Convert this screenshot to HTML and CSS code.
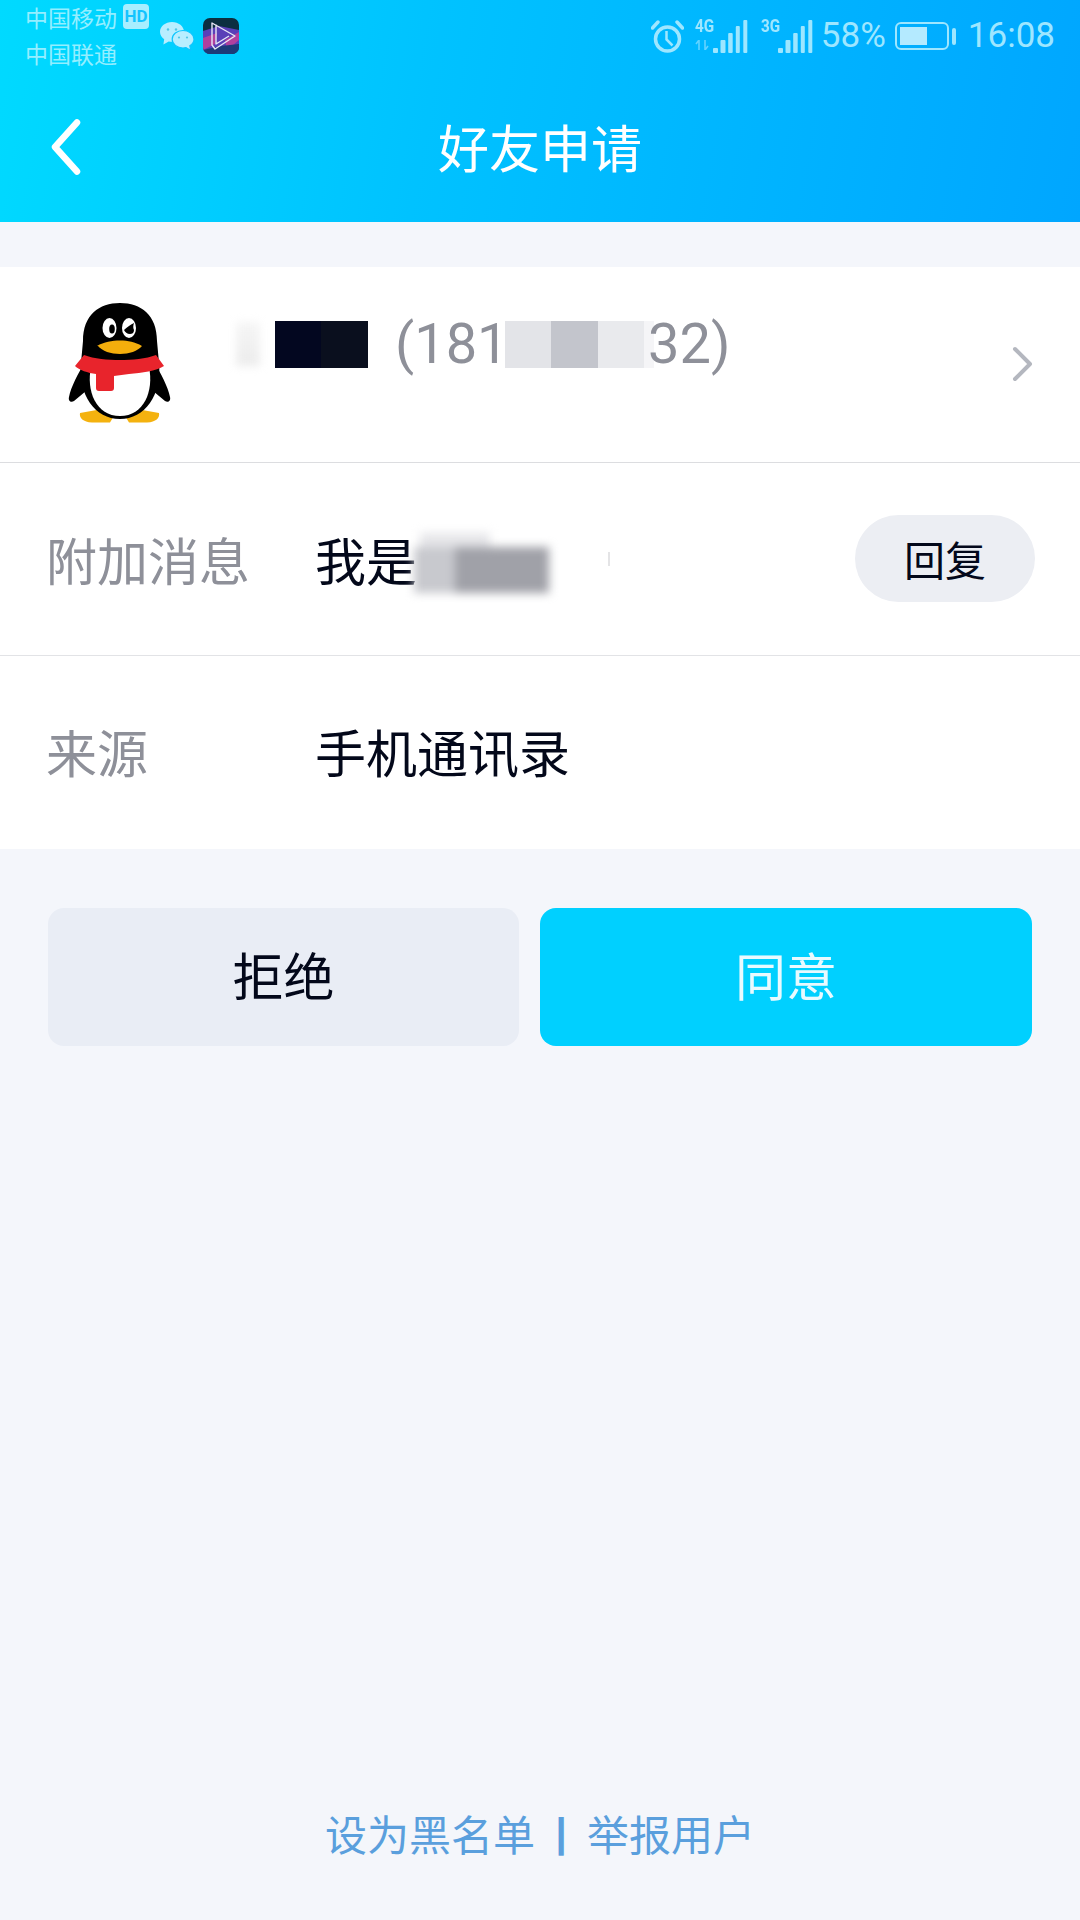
FILE: index.html
```html
<!DOCTYPE html>
<html lang="zh">
<head>
<meta charset="utf-8">
<title>好友申请</title>
<link rel="stylesheet" href="styles.css">
</head>
<body>
<div class="screen">
  <header class="header">
    <div class="status">
      <div class="carriers">
        <div class="carrier">中国移动<span class="hd">HD</span></div>
        <div class="carrier">中国联通</div>
      </div>
      <svg class="wechat" width="34" height="29" viewBox="0 0 34 29">
        <path d="M12 0C5.500 0 0 4.300 0 9.800c0 3 1.700 5.600 4.200 7.400L3.400 22.500l5.300-3.100c1 .3 2.100.4 3.300.4 6.500 0 12-4.500 12-10S18.500 0 12 0z" fill="#b8eeff"/>
        <path d="M23 8.500c-6 0-10.800 3.900-10.800 8.700S17 26 23 26c1 0 2-.1 3-.4l4.800 3-1-4.900c2.700-1.600 4.200-4 4.200-6.500 0-4.800-5-8.700-11-8.700z" fill="#b8eeff" stroke="#0cc6ff" stroke-width="1.200"/>
        <circle cx="8" cy="7.500" r="1.200" fill="#52c8e6"/><circle cx="16" cy="7.500" r="1.200" fill="#52c8e6"/>
        <circle cx="19" cy="15.500" r="1.100" fill="#52c8e6"/><circle cx="27" cy="15.500" r="1.100" fill="#52c8e6"/>
      </svg>
      <svg class="app" width="36" height="36" viewBox="0 0 36 36">
        <defs>
          <clipPath id="appclip"><rect width="36" height="36" rx="7"/></clipPath>
        </defs>
        <g clip-path="url(#appclip)">
          <rect width="36" height="36" fill="#0b2f40"/>
          <path d="M0 13L16 8 36 12V26L20 34 0 36z" fill="#5a3fb8"/>
          <path d="M0 20L14 15 12 26 0 32zM22 22L36 14V22L24 32z" fill="#b0409e"/>
          <path d="M0 32L18 28 36 26V36H0z" fill="#1c3a78"/>
          <path d="M9 5L32 18 12 31 9 27zM13 6.500V26L26 18" fill="none" stroke="#e6e6f5" stroke-width="1.400" stroke-linejoin="round"/>
        </g>
      </svg>
      <div class="spacer"></div>
      <svg class="alarm" width="33" height="33" viewBox="0 0 33 33" fill="none" stroke="#9ee6ff" stroke-width="3.500">
        <circle cx="16.500" cy="19" r="12"/>
        <path d="M15.500 11v8.500l6 6" stroke-width="2.500"/>
        <path d="M1.500 8l5.500-6M31.500 8L26 2" stroke-linecap="round"/>
      </svg>
      <div class="sim sim-4g">
        <span class="net">4G</span>
        <svg class="updown" width="16" height="10" viewBox="0 0 16 10"><path d="M4 0v10M1 4l3-4M10 0v10l3-4" stroke="#63d2ff" stroke-width="1.600" fill="none"/></svg>
      </div>
      <svg class="bars" width="35" height="34" viewBox="0 0 35 34" fill="#9ee6ff">
        <rect x="0" y="28" width="5" height="5" rx="1"/><rect x="7.500" y="20" width="5" height="13" rx="1"/><rect x="15.200" y="13" width="4.500" height="20" rx="1"/><rect x="22.800" y="6" width="4" height="27" rx="1"/><rect x="30.300" y="0" width="4" height="33" rx="1"/>
      </svg>
      <div class="sim sim-3g"><span class="net">3G</span></div>
      <svg class="bars" width="35" height="34" viewBox="0 0 35 34" fill="#9ee6ff">
        <rect x="0" y="28" width="5" height="5" rx="1"/><rect x="7.500" y="20" width="5" height="13" rx="1"/><rect x="15.200" y="13" width="4.500" height="20" rx="1"/><rect x="22.800" y="6" width="4" height="27" rx="1"/><rect x="30.300" y="0" width="4" height="33" rx="1"/>
      </svg>
      <span class="pct">58%</span>
      <div class="battery"><div class="battery-fill"></div></div>
      <div class="battery-tip"></div>
      <span class="clock">16:08</span>
    </div>
    <div class="nav">
      <svg class="back" width="30" height="56" viewBox="0 0 30 56" fill="none" stroke="#fff" stroke-width="6.500" stroke-linecap="round" stroke-linejoin="round"><path d="M26 3.500L4 28l22 24.500"/></svg>
      <h1 class="title">好友申请</h1>
    </div>
  </header>

  <section class="list">
    <div class="row row-user">
      <svg class="penguin" width="103" height="120" viewBox="0 0 103 120">
        <path d="M12 110c-1 5 3 9 12 9.500h18l3-5-8-9zM91 110c1 5-3 9-12 9.500H61l-3-5 8-9z" fill="#f4b20f"/>
        <path d="M18 58C10 70 3 84 1 94c-1 4 2 6 5 4l12-10zM85 58c8 12 15 26 17 36 1 4-2 6-5 4L85 88z" fill="#000"/>
        <path d="M15 38C15 12 31 0 52 0s37 12 37 38l2 22c3 32-14 56-39 56S10 92 13 60z" fill="#000"/>
        <path d="M23 64h58c5 24-5 49-29 49S18 88 23 64z" fill="#fff"/>
        <ellipse cx="41.500" cy="25" rx="7" ry="10" fill="#fff"/>
        <ellipse cx="44" cy="26" rx="2.800" ry="4.500" fill="#000"/>
        <ellipse cx="61" cy="25" rx="7" ry="10" fill="#fff"/>
        <path d="M56 27c3-3 6-5 10-7-1 3-1 5 0 7 0 3-2 4-4 4-3 0-5-2-6-4z" fill="#000"/>
        <path d="M29 43c7-4 15-5.500 23-5.500S67 39 74 43c-4 5-13 8-22 8s-18-3-22-8z" fill="#f4ae0c"/>
        <path d="M7 63l9-11c10 4 24 5 36 5s26-1 36-5l8 11c-8 5-22 7-35 8l-15 2v12c0 2-1 3-3 3H31c-2 0-3-1-3-3V71c-8-1-17-4-21-8z" fill="#e8242c"/>
      </svg>
      <div class="user-line">
        <span class="smudge"></span>
        <span class="black-box"></span>
        <span class="qq">(181</span><span class="patch patch-a"></span><span class="patch patch-b"></span><span class="patch patch-c"></span><span class="patch patch-d"></span><span class="qq qq-end">32)</span>
      </div>
      <svg class="chevron" width="22" height="36" viewBox="0 0 22 36" fill="none" stroke="#b4b7bf" stroke-width="4" stroke-linecap="round" stroke-linejoin="round"><path d="M3 3l15 15L3 33"/></svg>
    </div>
    <div class="row row-info">
      <span class="label">附加消息</span>
      <span class="value">我是</span><span class="blur-name"><span class="blur-top"></span></span><span class="speck"></span>
      <span class="reply">回复</span>
    </div>
    <div class="row row-info">
      <span class="label">来源</span>
      <span class="value">手机通讯录</span>
    </div>
  </section>

  <div class="actions">
    <button class="btn btn-reject">拒绝</button>
    <button class="btn btn-accept">同意</button>
  </div>

  <footer class="footer">
    <span>设为黑名单</span><span class="sep">|</span><span>举报用户</span>
  </footer>
</div>
</body>
</html>
```

FILE: styles.css
```css
* { box-sizing: border-box; margin: 0; padding: 0; }
html, body { width: 1080px; height: 1920px; overflow: hidden; }
body { background: #f4f6fb; font-family: "Noto Sans CJK SC", "Roboto", sans-serif; }
.screen { width: 1080px; height: 1920px; display: flex; flex-direction: column; }

.header { height: 222px; background: linear-gradient(100deg, #00daff 0%, #00c2ff 40%, #00a6ff 100%); display: flex; flex-direction: column; }
.status { height: 72px; display: flex; align-items: center; padding: 0 25px 0 25px; color: #9ee6ff; }
.carriers { width: 135px; margin-top: -3px; flex: none; }
.carrier { font-size: 23px; line-height: 36px; height: 36px; white-space: nowrap; display: flex; align-items: center; color: #94eeff; }
.hd { margin-left: 6px; width: 26px; height: 25px; border-radius: 4px; background: #a8eeff; color: #14c4ff; font: bold 17px/25px "Roboto", sans-serif; text-align: center; flex: none; }
.wechat { flex: none; }
.app { flex: none; margin-left: 9px; }
.spacer { flex: 1; }
.alarm { flex: none; margin-top: 1px; }
.sim { height: 36px; display: flex; flex-direction: column; align-items: flex-start; flex: none; }
.sim-4g { width: 18px; margin-left: 11px; }
.sim-3g { width: 17px; margin-left: 13px; }
.net { font: bold 18px/16px "Roboto", sans-serif; transform: scaleX(.85); transform-origin: left; white-space: nowrap; }
.updown { margin-top: 6px; }
.bars { flex: none; margin-top: 1px; }
.pct, .clock { font-family: "Roboto", sans-serif; font-size: 35px; line-height: 40px; flex: none; }
.pct { margin-left: 8px; }
.battery { width: 54px; height: 28px; margin-left: 9px; border: 2px solid #9ee6ff; border-radius: 6px; padding: 3px; flex: none; }
.battery-fill { width: 27px; height: 100%; background: #b4eaff; }
.battery-tip { width: 4px; height: 17px; border-radius: 2px; background: #9ee6ff; margin-left: 3px; flex: none; }
.clock { margin-left: 12px; }

.nav { flex: 1; display: flex; align-items: center; justify-content: center; position: relative; padding-bottom: 2px; }
.back { position: absolute; left: 51px; top: 47px; }
.title { font-size: 51px; font-weight: 400; color: #fff; line-height: 1; }

.list { margin-top: 45px; background: #fff; }
.row { display: flex; align-items: center; }
.row-user { height: 196px; border-bottom: 1px solid #dcdde0; padding: 0 46px 0 68px; }
.row-info { height: 193px; padding: 0 45px 0 46px; border-bottom: 1px solid #e2e3e6; }
.row-info:last-child { border-bottom: 0; padding-bottom: 2px; }

.penguin { flex: none; margin-bottom: 3px; }
.user-line { flex: 1; margin-left: 65px; display: flex; align-items: center; height: 64px; margin-top: -41px; }
.smudge { width: 24px; height: 44px; background: linear-gradient(180deg, #f6f6f6, #ececec); filter: blur(4px); flex: none; }
.black-box { width: 93px; height: 47px; margin-left: 15px; background: linear-gradient(90deg, #030720 0 50%, #0a0f1e 50% 100%); flex: none; }
.qq { font-family: "Roboto", sans-serif; font-size: 56px; color: #8e9099; line-height: 64px; margin-left: 27px; white-space: nowrap; }
.qq-end { margin-left: -6px; }
.patch { width: 46.5px; height: 47px; flex: none; }
.patch-a { background: #e3e4e8; margin-left: -4px; }
.patch-b { background: #c3c5cc; }
.patch-c { background: #e9eaed; }
.patch-d { background: #f5f5f7; width: 10px; }
.chevron { flex: none; margin-bottom: 2px; }

.label { width: 269px; font-size: 51px; color: #8e9099; line-height: 1; flex: none; }
.value { font-size: 51px; color: #03081a; line-height: 1; white-space: nowrap; }
.blur-name { position: relative; width: 135px; height: 46px; background: linear-gradient(90deg, #c8c9ce 0 30%, #a0a1a8 30% 100%); filter: blur(5px); margin-top: 22px; margin-left: -3px; flex: none; }
.blur-top { position: absolute; left: 6px; top: -14px; width: 70px; height: 14px; background: #e6e6e9; }
.speck { width: 2px; height: 14px; margin-left: 59px; background: #e4e4e6; flex: none; }
.reply { margin-left: auto; width: 180px; height: 87px; margin-bottom: 2px; border-radius: 44px; background: #eceef3; font-size: 41px; color: #03081a; display: flex; align-items: center; justify-content: center; }

.actions { display: flex; gap: 21px; margin: 59px 48px 0; }
.btn { height: 138px; border: 0; border-radius: 16px; font-family: inherit; font-size: 51px; padding-bottom: 6px; display: flex; align-items: center; justify-content: center; }
.btn-reject { width: 471px; background: #e9edf5; color: #03081a; }
.btn-accept { width: 492px; background: #00d0ff; color: #e8faff; }

.footer { margin-top: auto; padding-bottom: 62px; display: flex; align-items: center; justify-content: center; font-size: 42px; line-height: 50px; color: #5a9fdd; }
.sep { width: 52px; text-align: center; font-family: "Liberation Sans", sans-serif; font-weight: bold; font-size: 40px; }
```
